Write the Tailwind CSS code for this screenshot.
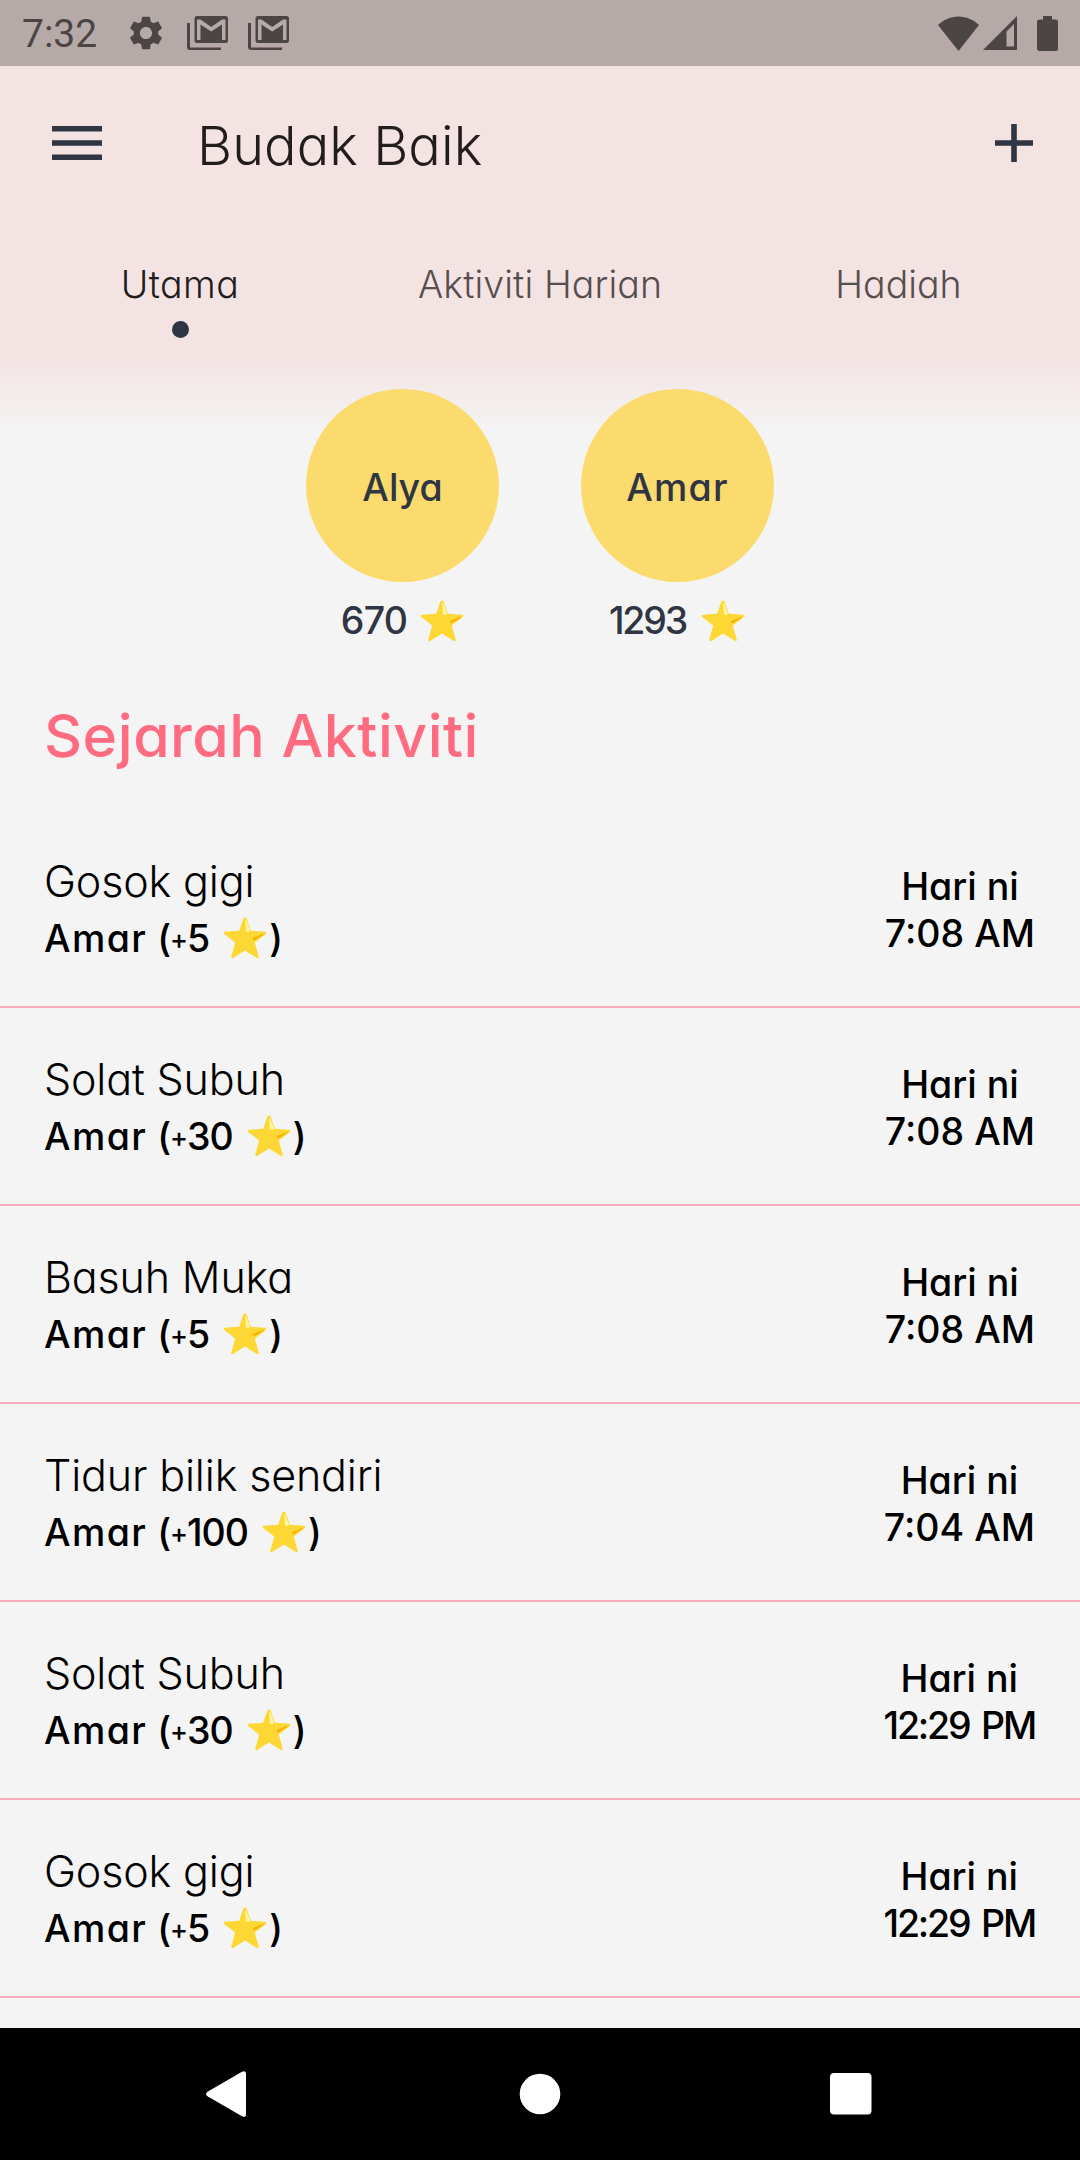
<!doctype html>
<html lang="ms">
<head>
	<title>Budak Baik</title>
	<meta charset="UTF-8">
	<meta content="width=device-width, initial-scale=1.0" name="viewport">
	<script src="https://cdn.jsdelivr.net/npm/@tailwindcss/browser@4"></script>
</head>

<body class="bg-[#f4f4f4] text-black font-['Inter','Noto_Sans',sans-serif] [font-feature-settings:'cv11'] overflow-hidden">

<svg class="hidden">
	<symbol id="star" viewBox="0 0 44 42">
		<path d="M22 .5c.9 0 1.600.8 2 2l3.800 11.300 14.200 1c1.600.2 1.800 1.300.8 2.200L31.800 25.600l3.900 14c.4 1.500-.5 2.100-1.800 1.400L22 33.400 10.100 41c-1.300.7-2.200.1-1.800-1.400l3.900-14L1.200 17c-1-.9-.8-2 .8-2.200l14.200-1L20 2.500c.4-1.200 1.100-2 2-2z" fill="#fdd835"/>
		<path d="M22.800 13.500L22.300 4.500c0-1.800.8-1.800 1.300-.5l3.200 9c.5 2.400-3.700 3-4 .5z" fill="#fff59d"/>
		<path d="M30.500 20.700l9.500-3.700c1-.3 1 .3.400.9l-8 4.800c-2 1-3.800-1.200-1.900-2z" fill="#f4b400"/>
	</symbol>
	<symbol id="mail" viewBox="0 0 42 36">
		<path d="M0 7h3v24.500h31V34H3a3 3 0 0 1-3-3z"/>
		<path fill-rule="evenodd" d="M10 0h28.500A2.500 2.500 0 0 1 41 2.500v22a2.500 2.500 0 0 1-2.500 2.500H10a2.500 2.500 0 0 1-2.500-2.500v-22A2.500 2.500 0 0 1 10 0zM10 3.500V24h3.500V8.500L24.200 15.500 35 8.500V24h3.500V3.500H35L24.200 11 13.500 3.500z"/>
	</symbol>
</svg>

<div class="flex flex-col h-[2160px] w-[1080px]">

	<!-- Status bar -->
	<div class="flex h-[66px] shrink-0 items-center bg-[#b6aaa9] pl-[22px] pr-[22px] text-[#4b4544] fill-[#4b4544]">
		<p class="font-['Roboto',sans-serif] text-[39px] leading-[66px] w-[107px] pt-0.5">7:32</p>
		<svg class="size-[34px]" viewBox="2 2 20 20"><path d="M19.140 12.940c.04-.3.06-.61.06-.94 0-.32-.02-.64-.07-.94l2.030-1.580c.18-.14.23-.41.12-.61l-1.920-3.320c-.12-.22-.37-.29-.59-.22l-2.390.96c-.5-.38-1.030-.7-1.620-.94l-.36-2.540c-.04-.24-.24-.41-.48-.41h-3.840c-.24 0-.43.17-.47.41l-.36 2.540c-.59.24-1.130.57-1.620.94l-2.390-.96c-.22-.08-.47 0-.59.22L2.740 8.870c-.12.21-.08.47.12.61l2.030 1.580c-.05.3-.09.63-.09.94s.02.64.07.94l-2.030 1.580c-.18.14-.23.41-.12.61l1.920 3.320c.12.22.37.29.59.22l2.390-.96c.5.38 1.030.7 1.620.94l.36 2.540c.05.24.24.41.48.41h3.840c.24 0 .44-.17.47-.41l.36-2.540c.59-.24 1.130-.56 1.620-.94l2.390.96c.22.08.47 0 .59-.22l1.920-3.320c.12-.22.07-.47-.12-.61l-2.010-1.580zM12 15.600c-1.980 0-3.600-1.620-3.600-3.600s1.620-3.600 3.600-3.600 3.600 1.620 3.600 3.600-1.620 3.600-3.600 3.600z"/></svg>
		<svg class="ml-6 mt-px w-[42px] h-9"><use href="#mail"/></svg>
		<svg class="ml-[19px] mt-px w-[42px] h-9"><use href="#mail"/></svg>
		<svg class="ml-auto w-[41px] h-[35px]" viewBox="0 0 41 35"><path d="M20.500 35L0 9C5.500 4 12.500.5 20.500.5S35.500 4 41 9z"/></svg>
		<svg class="ml-1 w-[34px] h-[34px]" viewBox="0 0 34 34"><path fill-rule="evenodd" d="M34 0v34H0zM31 8l-7.500 7.500V30.500H31z"/></svg>
		<svg class="ml-5 w-[21px] h-[35px]" viewBox="0 0 21 35"><path d="M6 0h9v3.500h3.500A2.500 2.500 0 0 1 21 6v26.500a2.500 2.500 0 0 1-2.500 2.500h-16A2.500 2.500 0 0 1 0 32.500V6a2.500 2.500 0 0 1 2.500-2.500H6z"/></svg>
	</div>

	<!-- Header -->
	<div class="h-[287px] shrink-0 bg-[#f4e3e3]">
		<div class="flex h-[154px] items-center pl-[52px] pr-[47px] text-[#2f3542]">
			<svg class="w-[50px] h-[34px]" viewBox="0 0 50 34" fill="currentColor"><path d="M0 0h50v5.600H0zM0 14.200h50v5.600H0zM0 28.400h50V34H0z"/></svg>
			<h1 class="ml-[95px] mt-[5px] text-[54px] font-light leading-[64px] tracking-[0.1px] text-[#231c1c]">Budak Baik</h1>
			<svg class="ml-auto size-[38px]" viewBox="0 0 38 38" fill="currentColor"><path d="M16.200 0h5.600v16.200H38v5.600H21.800V38h-5.600V21.800H0v-5.600h16.200z"/></svg>
		</div>
		<div class="grid grid-cols-3 pt-[41px] text-center text-[37.500px] font-light leading-[48px] text-[#574e4e]">
			<div class="text-[#231c1c]">
				<p class="tracking-[0.4px]">Utama</p>
				<div class="mx-auto mt-3 size-[17px] rounded-full bg-[#2f3542]"></div>
			</div>
			<p class="tracking-[0.1px]">Aktiviti Harian</p>
			<p class="pr-[3px]">Hadiah</p>
		</div>
	</div>

	<!-- Children -->
	<div class="flex h-[323px] shrink-0 justify-center gap-[83px] bg-linear-to-b from-[#f4e3e3] to-[#f4f4f4] to-[80px] pt-9 text-[37.500px] font-[450] text-[#2f3542]">
		<div class="flex w-48 flex-col items-center">
			<div class="flex size-[193px] shrink-0 items-center justify-center rounded-full bg-[#fbdb6e] pt-1.5"><p>Alya</p></div>
			<p class="mt-[15px] flex items-center gap-[13px] leading-[48px] tracking-[-0.8px]">670<svg class="w-[44px] h-[42px]"><use href="#star"/></svg></p>
		</div>
		<div class="flex w-48 flex-col items-center">
			<div class="flex size-[193px] shrink-0 items-center justify-center rounded-full bg-[#fbdb6e] pt-1.5"><p class="tracking-[1.2px]">Amar</p></div>
			<p class="mt-[15px] flex items-center gap-[15px] pr-px leading-[48px] tracking-[-2.200px]">1293<svg class="w-[44px] h-[42px]"><use href="#star"/></svg></p>
		</div>
	</div>

	<h2 class="h-[134px] shrink-0 pl-[44px] pt-[25px] text-[59px] font-medium leading-[70px] tracking-[0.5px] text-[#ff6b81]">Sejarah Aktiviti</h2>

	<!-- History -->
	<div class="grow overflow-hidden" id="history"></div>

	<!-- Navigation bar -->
	<div class="flex h-[132px] shrink-0 items-center bg-black fill-white pl-[206px]">
		<svg class="w-10 h-[46px]" viewBox="0 0 40 46"><path d="M1.500 20.700L36 .7Q40-1 40 3v40q0 4-4 2.300L1.500 25.300Q-1.500 23 1.500 20.700z"/></svg>
		<svg class="ml-[273px] size-[42px]" viewBox="0 0 42 42"><circle cx="21" cy="21" r="20.300"/></svg>
		<svg class="ml-[269px] size-[42px]" viewBox="0 0 42 42"><rect width="41.500" height="41.500" rx="4"/></svg>
	</div>
</div>

<script>
	const activities = [
		{name: 'Gosok gigi', child: 'Amar', point: 5, time: '7:08 AM'},
		{name: 'Solat Subuh', child: 'Amar', point: 30, time: '7:08 AM'},
		{name: 'Basuh Muka', child: 'Amar', point: 5, time: '7:08 AM'},
		{name: 'Tidur bilik sendiri', child: 'Amar', point: 100, time: '7:04 AM'},
		{name: 'Solat Subuh', child: 'Amar', point: 30, time: '12:29 PM'},
		{name: 'Gosok gigi', child: 'Amar', point: 5, time: '12:29 PM'}
	];

	document.getElementById('history').innerHTML = activities.map(item => `
		<div class="flex h-[198px] justify-between border-b-2 border-[#f7afbd] pl-[44px] pr-[45px]">
			<div class="pt-11">
				<p class="text-[43px] font-light leading-[55px] tracking-[-0.15px]">${item.name}</p>
				<div class="flex pt-0.5 text-[37.500px] font-medium leading-[56px]">
					<p class="tracking-[1.4px]">${item.child}</p>
					<p class="ml-[10px] tracking-[-1px]">(<span class="align-[3px] text-[27px] leading-none">+</span>${item.point}</p>
					<svg class="ml-[14px] mr-0.5 mt-[6px] w-[44px] h-[42px]"><use href="#star"/></svg>
					<p>)</p>
				</div>
			</div>
			<div class="pt-[53px] text-center text-[37.500px] font-medium leading-[47px]">
				<p>Hari ni</p>
				<p class="${item.time.length > 7 ? 'tracking-[-2.200px] [word-spacing:4px]' : 'tracking-normal'}">${item.time}</p>
			</div>
		</div>
	`).join('');
</script>

</body>
</html>
